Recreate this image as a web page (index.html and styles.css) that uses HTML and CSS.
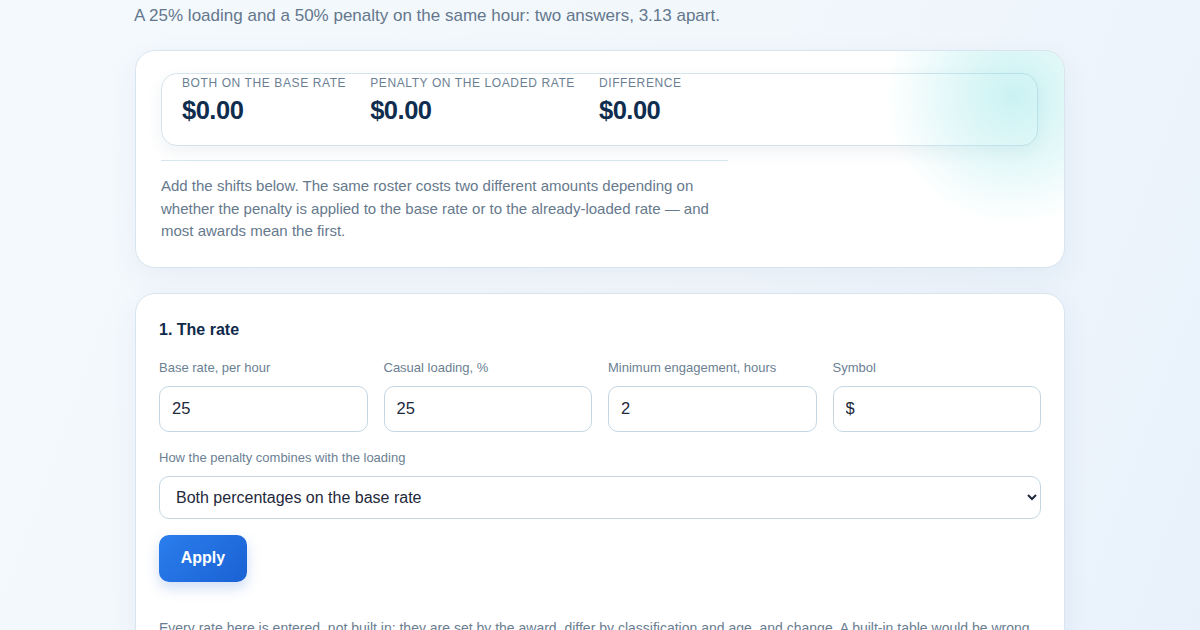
FILE: index.html
```html
<!DOCTYPE html>
<html lang="en">
<head>
<meta charset="utf-8">
<title>Penalty on loading</title>
<link rel="stylesheet" href="styles.css">
</head>
<body>
<main class="wrap">
  <p class="subtitle">A 25% loading and a 50% penalty on the same hour: two answers, 3.13 apart.</p>

  <section class="card summary">
    <div class="stats">
      <div class="stat">
        <div class="stat-label">Both on the base rate</div>
        <div class="stat-value">$0.00</div>
      </div>
      <div class="stat">
        <div class="stat-label">Penalty on the loaded rate</div>
        <div class="stat-value">$0.00</div>
      </div>
      <div class="stat">
        <div class="stat-label">Difference</div>
        <div class="stat-value">$0.00</div>
      </div>
    </div>
    <hr class="divider">
    <p class="intro">Add the shifts below. The same roster costs two different amounts depending on whether the penalty is applied to the base rate or to the already-loaded rate — and most awards mean the first.</p>
  </section>

  <section class="card form">
    <h2 class="section-title">1. The rate</h2>
    <div class="grid4">
      <label class="field">
        <span class="field-label">Base rate, per hour</span>
        <input class="input" type="text" value="25">
      </label>
      <label class="field">
        <span class="field-label">Casual loading, %</span>
        <input class="input" type="text" value="25">
      </label>
      <label class="field">
        <span class="field-label">Minimum engagement, hours</span>
        <input class="input" type="text" value="2">
      </label>
      <label class="field">
        <span class="field-label">Symbol</span>
        <input class="input" type="text" value="$">
      </label>
    </div>
    <label class="field wide">
      <span class="field-label">How the penalty combines with the loading</span>
      <select class="select">
        <option>Both percentages on the base rate</option>
        <option>Penalty on the loaded rate</option>
      </select>
    </label>
    <button class="btn" type="button">Apply</button>
    <p class="note">Every rate here is entered, not built in: they are set by the award, differ by classification and age, and change. A built-in table would be wrong for most people.</p>
  </section>
</main>
</body>
</html>
```

FILE: styles.css
```css
* { box-sizing: border-box; }

html, body {
  margin: 0;
  padding: 0;
}

body {
  font-family: "Liberation Sans", Arial, sans-serif;
  color: #1e293b;
  background: linear-gradient(110deg, #f4f9fd 0%, #f2f7fc 55%, #e8f1fb 100%);
  min-height: 630px;
  overflow: hidden;
}

.wrap {
  width: 930px;
  margin: 0 auto;
  padding-top: 3px;
}

.subtitle {
  margin: 0 0 22px -1px;
  font-size: 17px;
  line-height: 25px;
  color: #64778c;
}

.card {
  position: relative;
  background: #ffffff;
  border: 1px solid #d9e5ee;
  border-radius: 20px;
  box-shadow: 0 10px 30px rgba(30, 70, 120, 0.06);
  overflow: hidden;
}

.summary {
  padding: 22px 26px 24px 25px;
  margin-bottom: 25px;
}

.summary::after {
  content: "";
  position: absolute;
  top: -85px;
  right: -80px;
  width: 260px;
  height: 260px;
  border-radius: 50%;
  background: radial-gradient(circle at 50% 50%, rgba(110, 220, 222, 0.36) 0%, rgba(140, 226, 228, 0.24) 35%, rgba(200, 240, 240, 0.0) 70%);
  pointer-events: none;
}

.stats {
  display: flex;
  gap: 24px;
  padding: 0 20px 19px 20px;
  border: 1px solid #d4e3ec;
  border-radius: 16px;
  background: #ffffff;
  box-shadow: 0 6px 16px rgba(30, 70, 120, 0.07);
}

.stat-label {
  font-size: 12px;
  line-height: 18px;
  text-transform: uppercase;
  letter-spacing: 0.6px;
  color: #6b7f93;
}

.stat-value {
  margin-top: 2px;
  font-size: 25.5px;
  line-height: 32px;
  font-weight: 700;
  color: #0f2d4f;
  letter-spacing: -0.5px;
}

.divider {
  width: 567px;
  margin: 14px 0 0 0;
  border: 0;
  border-top: 1px solid #d6e6ef;
}

.intro {
  width: 568px;
  margin: 14px 0 0 0;
  font-size: 15px;
  line-height: 22.5px;
  color: #66798d;
}

.form {
  padding: 25px 23px 40px 23px;
}

.section-title {
  margin: 0;
  font-size: 16px;
  line-height: 22px;
  font-weight: 700;
  color: #0f2a4a;
}

.grid4 {
  display: grid;
  grid-template-columns: repeat(4, minmax(0, 1fr));
  gap: 16px;
  margin-top: 18px;
}

.field {
  display: flex;
  flex-direction: column;
  gap: 9px;
  min-width: 0;
}

.field.wide {
  margin-top: 17px;
}

.field-label {
  font-size: 13px;
  line-height: 18px;
  color: #6b7f93;
}

.input {
  width: 100%;
  min-width: 0;
  height: 46px;
  padding: 0 12px;
  font-family: "Liberation Sans", Arial, sans-serif;
  font-size: 16.5px;
  color: #1e293b;
  background: #ffffff;
  border: 1px solid #c3d6e2;
  border-radius: 10px;
  outline: none;
}

.select {
  width: 100%;
  height: 43px;
  padding: 0 12px;
  font-family: "Liberation Sans", Arial, sans-serif;
  font-size: 16px;
  color: #1e293b;
  background: #ffffff;
  border: 1px solid #c3d6e2;
  border-radius: 10px;
  outline: none;
}

.btn {
  display: block;
  margin-top: 16px;
  width: 88px;
  height: 47px;
  font-family: "Liberation Sans", Arial, sans-serif;
  font-size: 16px;
  font-weight: 700;
  color: #ffffff;
  background: linear-gradient(135deg, #2b7ded 0%, #1a62d4 100%);
  border: 0;
  border-radius: 10px;
  box-shadow: 0 6px 14px rgba(30, 100, 210, 0.22);
  cursor: pointer;
}

.note {
  margin: 36px 0 0 0;
  font-size: 14px;
  line-height: 21px;
  color: #6b7d90;
}
```
